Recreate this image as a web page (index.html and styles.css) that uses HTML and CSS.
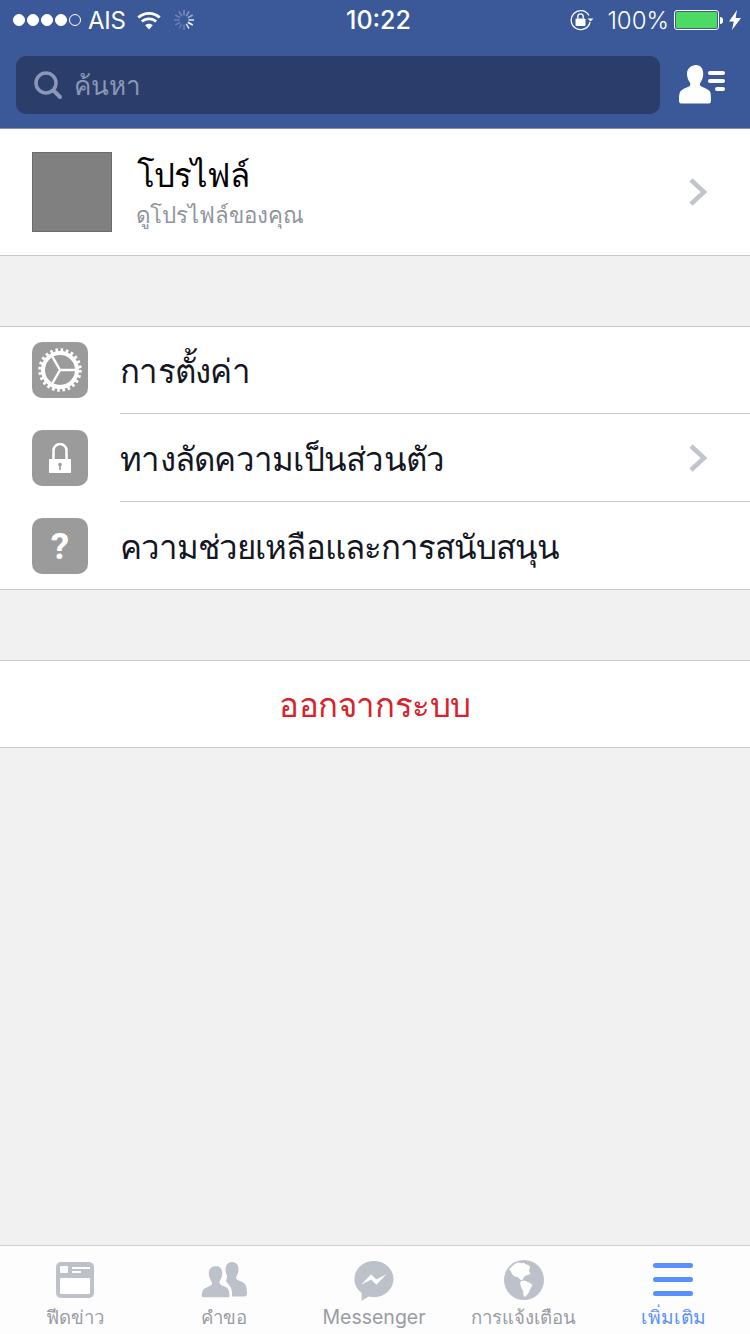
FILE: index.html
```html
<!DOCTYPE html>
<html lang="th">
<head>
  <meta charset="UTF-8">
  <title>เพิ่มเติม</title>
  <link rel="stylesheet" href="styles.css">
</head>
<body>
<div class="phone">
  <header class="top">
    <div class="status">
      <div class="status-left">
        <span class="dots"><i></i><i></i><i></i><i></i><i class="off"></i></span>
        <span class="carrier">AIS</span>
        <svg class="wifi" width="26" height="20" viewBox="0 0 26 20">
          <path d="M13 19.5 9.2 15.2a5.6 5.6 0 0 1 7.6 0z" fill="#fff"/>
          <path d="M5.9 11.6a10.4 10.4 0 0 1 14.2 0M2.3 7.6a15.6 15.6 0 0 1 21.4 0" fill="none" stroke="#fff" stroke-width="2.8"/>
        </svg>
        <svg class="spinner" width="22" height="22" viewBox="0 0 22 22" stroke="#fff" stroke-width="1.5">
          <path d="M11 1v5.500" opacity=".35"/>
          <path d="M11 1v5.500" transform="rotate(30 11 11)" opacity=".4"/>
          <path d="M11 1v5.500" transform="rotate(60 11 11)" opacity=".5"/>
          <path d="M11 1v5.500" transform="rotate(90 11 11)" opacity=".85"/>
          <path d="M11 1v5.500" transform="rotate(120 11 11)"/>
          <path d="M11 1v5.500" transform="rotate(150 11 11)" opacity=".8"/>
          <path d="M11 1v5.500" transform="rotate(180 11 11)" opacity=".25"/>
          <path d="M11 1v5.500" transform="rotate(210 11 11)" opacity=".2"/>
          <path d="M11 1v5.500" transform="rotate(240 11 11)" opacity=".2"/>
          <path d="M11 1v5.500" transform="rotate(270 11 11)" opacity=".25"/>
          <path d="M11 1v5.500" transform="rotate(300 11 11)" opacity=".25"/>
          <path d="M11 1v5.500" transform="rotate(330 11 11)" opacity=".3"/>
        </svg>
      </div>
      <div class="clock">10:22</div>
      <div class="status-right">
        <svg class="rotlock" width="24" height="22" viewBox="0 0 24 22">
          <path d="M19 6.500A9.500 9.500 0 1 0 20 13" fill="none" stroke="#fff" stroke-width="1.300"/>
          <path d="M17.500 9.500h6l-3 3z" fill="#fff"/>
          <rect x="5.500" y="9.500" width="10" height="7.500" rx="1" fill="#fff"/>
          <path d="M7.800 9.500V7.600a2.700 2.700 0 0 1 5.400 0v1.900" fill="none" stroke="#fff" stroke-width="1.400"/>
        </svg>
        <span class="percent">100%</span>
        <span class="battery"><span class="battery-fill"></span></span>
        <span class="battery-tip"></span>
        <svg class="bolt" width="12" height="20" viewBox="0 0 12 20"><path d="M8 0 0 11.500h4.800L3 20l9-12H6.600z" fill="#fff"/></svg>
      </div>
    </div>
    <div class="searchbar">
      <div class="search">
        <svg width="30" height="30" viewBox="0 0 30 30" fill="none" stroke="#8a97b6">
          <circle cx="13" cy="13" r="10" stroke-width="3.500"/>
          <path d="M20.500 20.500 27 27" stroke-width="4" stroke-linecap="round"/>
        </svg>
        <span>ค้นหา</span>
      </div>
      <svg class="friends" width="47" height="40" viewBox="0 0 47 40" fill="#fff">
        <path d="M17 0c4.500 0 7.200 3.500 7.200 8.500 0 3.500-1 6.500-2.700 9-.9 1.400-.7 3.200.8 4 3 1.500 6.500 2.500 8.300 4.500 1.100 1.200 1.400 3.500 1.400 9.500 0 2.500-1.200 3-3 3H3c-1.800 0-3-.5-3-2.500 0-6 .5-8.500 1.700-10 1.700-2 5.300-3 8.300-4.500 1.500-.8 1.700-2.600.8-4-1.700-2.500-2.800-5.500-2.800-9C8 3.500 12.500 0 17 0z"/>
        <rect x="29" y="6" width="17" height="4" rx="2"/>
        <rect x="29" y="14" width="17" height="4" rx="2"/>
        <rect x="36" y="22" width="10" height="4" rx="2"/>
      </svg>
    </div>
  </header>

  <main class="content">
    <section class="group">
      <div class="profile">
        <div class="avatar"></div>
        <div class="profile-text">
          <div class="profile-name">โปรไฟล์</div>
          <div class="profile-sub">ดูโปรไฟล์ของคุณ</div>
        </div>
        <svg class="chevron" width="20" height="30" viewBox="0 0 20 30"><path d="M3 3l13 12L3 27" fill="none" stroke="#c0c4cc" stroke-width="4.500"/></svg>
      </div>
    </section>

    <section class="group">
      <div class="row">
        <div class="row-icon">
          <svg width="46" height="46" viewBox="0 0 46 46">
            <circle cx="23" cy="23" r="17" fill="none" stroke="#fff" stroke-width="4"/>
            <circle cx="23" cy="23" r="20" fill="none" stroke="#fff" stroke-width="3.500" stroke-dasharray="2.618 2.618"/>
            <path d="M23 23H39M23 23 15 9M23 23 15 37" fill="none" stroke="#fff" stroke-width="2.500"/>
          </svg>
        </div>
        <div class="row-body"><span>การตั้งค่า</span></div>
      </div>
      <div class="row">
        <div class="row-icon">
          <svg width="24" height="30" viewBox="0 0 24 30">
            <path d="M5.500 17V7.500a6.500 6.500 0 0 1 13 0V17" fill="none" stroke="#fff" stroke-width="2.500"/>
            <path d="M1 16h22v14H1z" fill="#fff"/>
            <circle cx="12" cy="21.500" r="1.800" fill="#9b9b9b"/>
            <rect x="11.200" y="22" width="1.600" height="5" fill="#9b9b9b"/>
          </svg>
        </div>
        <div class="row-body">
          <span>ทางลัดความเป็นส่วนตัว</span>
          <svg class="chevron" width="20" height="30" viewBox="0 0 20 30"><path d="M3 3l13 12L3 27" fill="none" stroke="#c0c4cc" stroke-width="4.500"/></svg>
        </div>
      </div>
      <div class="row">
        <div class="row-icon"><span class="question">?</span></div>
        <div class="row-body"><span class="help">ความช่วยเหลือและการสนับสนุน</span></div>
      </div>
    </section>

    <section class="group logout">ออกจากระบบ</section>
  </main>

  <nav class="tabs">
    <div class="tab">
      <div class="tab-icon">
        <svg width="38" height="36" viewBox="0 0 38 36">
          <rect width="38" height="36" rx="5" fill="#bdc1c9"/>
          <rect x="4" y="16" width="30" height="16" rx="1" fill="#fff"/>
          <rect x="4" y="4" width="8" height="7" rx="1" fill="#fff"/>
          <path d="M16 6h18M16 10h9" stroke="#fff" stroke-width="2"/>
        </svg>
      </div>
      <span>ฟีดข่าว</span>
    </div>
    <div class="tab">
      <div class="tab-icon">
        <svg width="46" height="36" viewBox="0 0 46 36" fill="#bdc1c9">
          <path d="M31 0c4 0 6.500 3 6.500 7 0 3-.9 5.500-2 7.500-.9 1.500-.3 2.800 1.200 3.500 3 1.300 5.500 2 7.300 4 1.300 1.500 2 5 2 9.500 0 2-.9 3-2.500 3H31c.3-6-.7-9-2.500-11-2.200-2.300-3-3.500-3.500-5 1.200-1.800 1-3.500.7-5.500-.6-2-1.200-3-1.200-5C24.500 3 27 0 31 0z"/>
          <path d="M15 3.500c4.500 0 7 3 7 8 0 3-.8 5.500-2.300 7.500-1 1.500-.3 3 1 3.500 2.500 1.200 5 1.800 6.500 3.500 1.500 1.700 2 4 2 8.500 0 1-.7 1.500-2 1.500H2c-1.300 0-2-.5-2-2 0-3.500.8-6 2.500-7.500 2-1.800 5-2.500 7-3.800 1.200-.7.900-1.700 0-3.200C8 17 7 14.500 7 11.500c0-5 3-8 8-8z" stroke="#fdfdfd" stroke-width="1.500"/>
        </svg>
      </div>
      <span>คำขอ</span>
    </div>
    <div class="tab">
      <div class="tab-icon">
        <svg width="40" height="40" viewBox="0 0 42 42">
          <path d="M21 0C9.600 0 .5 8.300.5 19c0 6 2.900 11.200 7.500 14.600V42l7.200-4.800c1.900.5 3.700.8 5.800.8 11.400 0 20.500-8.800 20.500-19S32.400 0 21 0z" fill="#bdc1c9"/>
          <path d="M7.500 25 18 14l5.500 5.500L34 14 23.500 25 18 19.500z" fill="#fff"/>
        </svg>
      </div>
      <span class="latin">Messenger</span>
    </div>
    <div class="tab">
      <div class="tab-icon">
        <svg width="40" height="40" viewBox="0 0 40 40">
          <circle cx="20" cy="20" r="20" fill="#bdc1c9"/>
          <path d="M14 2.500c3 1 4 .5 6.500.5 0 1.500 2 1 3.500 2 3 1.500 2 3.500 1 5-.5 1.500 1 2.500 1.500 3.500-1.500 1.500-4 1.500-6 3-1.500 1-1 3-3 3.500-2 .5-2-2.500-4-3-2-.2-3.500-.7-4.500-2-2-2-2-4.500-4-5.500C7.500 6.500 10.500 3.500 14 2.500z" fill="#fff"/>
          <path d="M17 21c3-.5 5-.5 6.500 1 2.500.5 3.500 2 5 3-1.500 2.500-2 4-3 5.500-.5 2.500-2 4-4 6-1.500.5-2 0-2-2 0-3-.5-4-2-6.500-.5-2.500-2.500-4-.5-7z" fill="#fff"/>
        </svg>
      </div>
      <span>การแจ้งเตือน</span>
    </div>
    <div class="tab active">
      <div class="tab-icon">
        <div class="burger"><i></i><i></i><i></i></div>
      </div>
      <span>เพิ่มเติม</span>
    </div>
  </nav>
</div>
</body>
</html>
```
FILE: styles.css
```css
* {
  box-sizing: border-box;
}
html, body {
  margin: 0;
  padding: 0;
}
body {
  font-family: "Noto Sans", "Liberation Sans", sans-serif;
  background: #f1f1f1;
  color: #14171f;
}
.phone {
  width: 750px;
  height: 1334px;
  display: flex;
  flex-direction: column;
  overflow: hidden;
}

/* header */
.top {
  height: 129px;
  background: #3b5998;
  border-bottom: 1px solid #8e9097;
  color: #fff;
}
.status {
  height: 40px;
  padding: 0 9px 0 13px;
  display: flex;
  align-items: center;
  justify-content: space-between;
  font-family: "Inter", "Liberation Sans", sans-serif;
  font-size: 24px;
  position: relative;
}
.status-left, .status-right {
  display: flex;
  align-items: center;
}
.dots {
  display: flex;
  gap: 2px;
}
.dots i {
  width: 12px;
  height: 12px;
  border-radius: 50%;
  background: #fff;
  border: 1px solid #fff;
}
.dots i.off {
  background: none;
}
.carrier {
  margin-left: 7px;
  letter-spacing: -0.3px;
}
.wifi {
  margin-left: 10px;
}
.spinner {
  margin-left: 11px;
}
.clock {
  position: absolute;
  left: 346px;
  font-size: 25px;
  font-weight: 500;
}
.percent {
  margin-left: 13px;
  font-weight: 300;
}
.battery {
  margin-left: 5px;
  width: 45px;
  height: 20px;
  border: 1px solid #fff;
  border-radius: 3px;
  padding: 1px;
  display: block;
}
.battery-fill {
  display: block;
  height: 100%;
  background: #4cd964;
  border-radius: 1px;
}
.battery-tip {
  width: 3px;
  height: 7px;
  margin-left: 1px;
  background: #fff;
  border-radius: 0 3px 3px 0;
}
.bolt {
  margin-left: 6px;
}
.searchbar {
  height: 88px;
  padding: 16px 24px 14px 16px;
  display: flex;
  align-items: center;
  justify-content: space-between;
}
.search {
  width: 644px;
  height: 58px;
  background: #2b3d6a;
  border-radius: 10px;
  padding-left: 17px;
  display: flex;
  align-items: center;
  gap: 11px;
  font-size: 26px;
  color: #8a97b6;
}
.search svg {
  flex: none;
}

/* lists */
.content {
  flex: 1;
}
.group {
  background: #fff;
  border-top: 1px solid #c8c8c8;
  border-bottom: 1px solid #c8c8c8;
  margin-bottom: 70px;
}
.group:first-child {
  border-top: 0;
}
.profile {
  height: 126px;
  padding: 0 42px 0 32px;
  display: flex;
  align-items: center;
}
.avatar {
  width: 80px;
  height: 80px;
  background: #808080;
  border: 1px solid #6b6b6b;
}
.profile-text {
  flex: 1;
  margin-left: 25px;
}
.profile-name {
  font-size: 33px;
  letter-spacing: -0.9px;
  line-height: 46px;
  color: #000;
}
.profile-sub {
  font-size: 22.3px;
  line-height: 34px;
  margin-left: -1px;
  color: #90949c;
}
.row {
  height: 88px;
  display: flex;
}
.row:first-child {
  margin-top: -1px;
}
.row:last-child {
  height: 87px;
}
.row-icon {
  width: 56px;
  height: 56px;
  margin: 16px 32px 0;
  background: #9b9b9b;
  border-radius: 10px;
  display: flex;
  align-items: center;
  justify-content: center;
  flex: none;
}
.question {
  color: #fff;
  font-family: "Roboto", sans-serif;
  font-weight: 700;
  font-size: 37px;
}
.row-body {
  flex: 1;
  display: flex;
  align-items: center;
  justify-content: space-between;
  padding-right: 42px;
  font-size: 33px;
  letter-spacing: -0.75px;
  border-bottom: 1px solid #c8c8c8;
}
.row-body span {
  padding-top: 3px;
}
.row-body .help {
  letter-spacing: -0.95px;
}
.row:last-child .row-body {
  border-bottom: 0;
}
.logout {
  height: 88px;
  padding-top: 3px;
  display: flex;
  align-items: center;
  justify-content: center;
  font-size: 33px;
  letter-spacing: -0.4px;
  color: #d8232a;
}

/* tab bar */
.tabs {
  height: 89px;
  background: #fdfdfd;
  border-top: 1px solid #d0d0d0;
  display: grid;
  grid-template-columns: repeat(5, 1fr);
  padding-right: 2px;
}
.tab {
  display: flex;
  flex-direction: column;
  align-items: center;
  padding-top: 14px;
  gap: 4px;
  font-size: 18.6px;
  line-height: 26px;
  color: #999ca3;
}
.tab .latin {
  font-family: "Inter", sans-serif;
  font-size: 19.5px;
}
.tab.active {
  color: #5890ff;
  font-size: 19.2px;
}
.tab-icon {
  height: 40px;
  display: flex;
  align-items: flex-start;
  justify-content: center;
}
.tab:nth-child(1) .tab-icon, .tab:nth-child(2) .tab-icon {
  padding-top: 2px;
}
.tab:nth-child(3) .tab-icon {
  padding-top: 1px;
}
.burger {
  width: 40px;
  height: 33px;
  margin-top: 3px;
  display: flex;
  flex-direction: column;
  justify-content: space-between;
}
.burger i {
  display: block;
  height: 5px;
  background: #5890ff;
  border-radius: 3px;
}
```
